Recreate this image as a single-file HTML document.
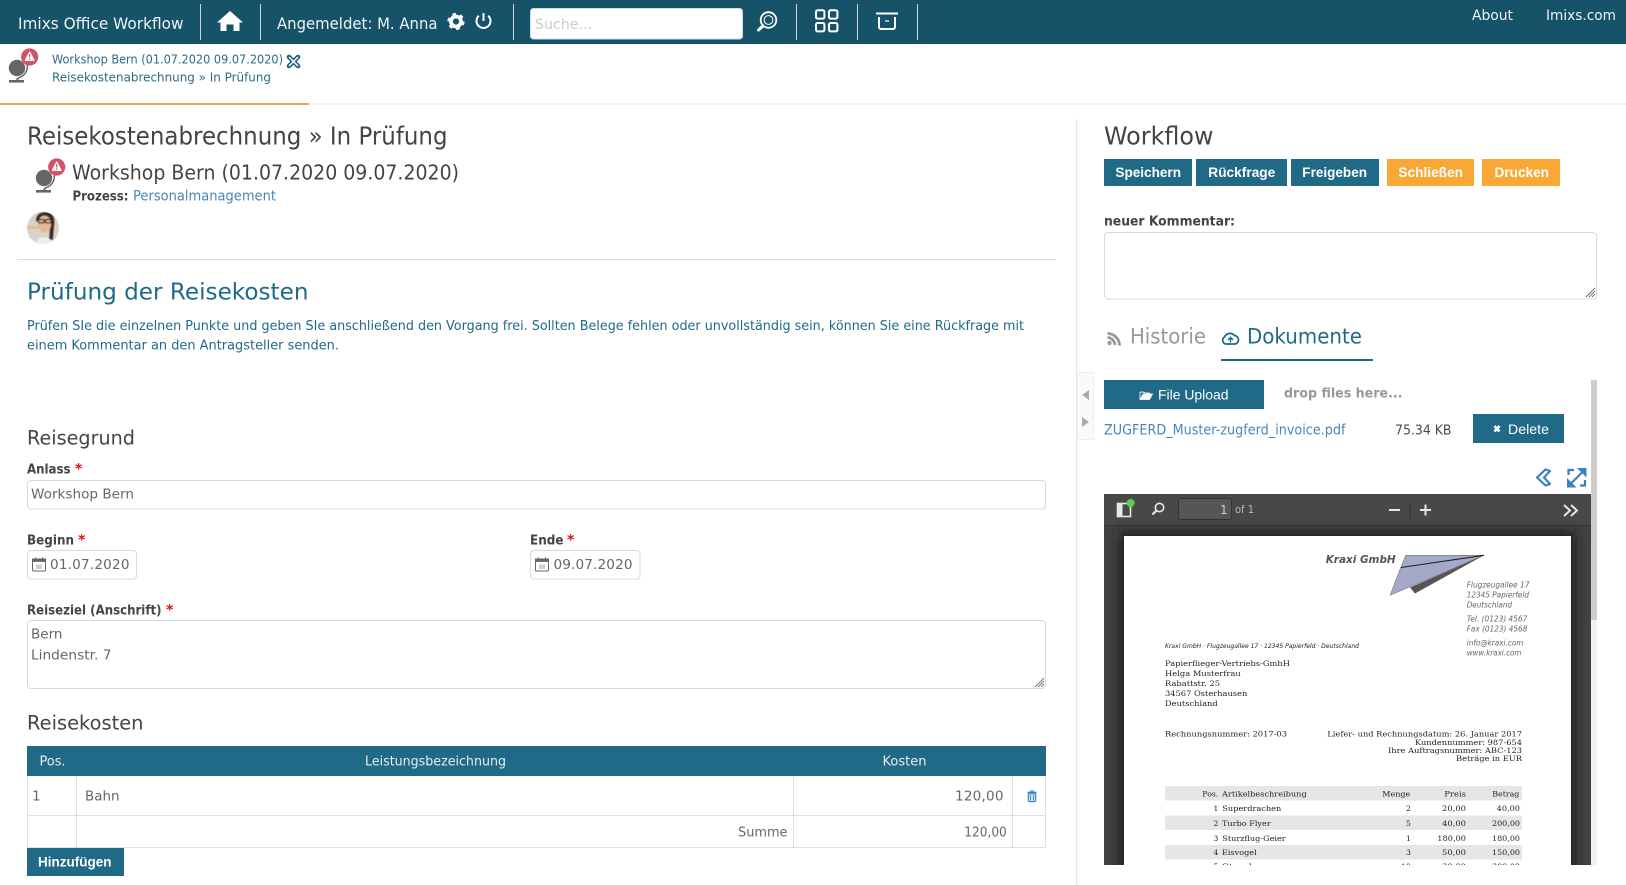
<!DOCTYPE html>
<html lang="de">
<head>
<meta charset="utf-8">
<title>Imixs Office Workflow</title>
<style>
html,body{margin:0;padding:0;background:#fff;width:1626px;height:885px;overflow:hidden}
svg{display:block;position:absolute;left:0;top:0}
text{font-family:"DejaVu Sans","Liberation Sans",sans-serif;fill:#444;white-space:pre}
.b{font-weight:700}
.lib{font-family:"Liberation Sans",Arial,sans-serif}
.ser{font-family:"DejaVu Serif","Liberation Serif",serif;fill:#222;font-size:7.6px}
.it{font-style:italic;fill:#666;font-size:8px}
.nav{fill:#eef3f5}
.blue{fill:#1f6a88}
.link{fill:#4a86b5}
.lab{font-weight:700;fill:#444;font-size:13.2px}
.star{font-weight:700;fill:#e01010;font-size:14px}
.val{fill:#666;font-size:13.6px}
.btn{font-family:"Liberation Sans",Arial,sans-serif;font-weight:700;fill:#fff;font-size:13.6px}
.th{fill:#e6eef2;font-size:13.4px}
</style>
</head>
<body>
<svg width="1626" height="885" viewBox="0 0 1626 885" xmlns="http://www.w3.org/2000/svg">
<defs>
<clipPath id="pdfclip"><rect x="1104" y="494" width="487" height="371"/></clipPath>
<filter id="sh" x="-10%" y="-10%" width="120%" height="120%"><feGaussianBlur stdDeviation="6"/></filter>
<filter id="soft"><feGaussianBlur stdDeviation=".6"/></filter>
<g id="globe">
<circle cx="17" cy="68" r="8.2" fill="#666"/>
<path d="M26 60.5C29.5 68 26 76 18 78" fill="none" stroke="#666" stroke-width="1.5"/>
<path d="M17.5 78V81" stroke="#666" stroke-width="2"/>
<path d="M9 81.3H24" stroke="#666" stroke-width="2.6"/>
<circle cx="29.7" cy="57" r="8.6" fill="#cf5468"/>
<path d="M29.7 52L34 60.3H25.4Z" fill="#fff" stroke="#fff" stroke-width="1.2" stroke-linejoin="round"/>
<path d="M29.7 54V57.4M29.7 58.4V59.6" stroke="#cf5468" stroke-width="1.3"/>
</g>
</defs>

<!-- navbar -->
<rect x="0" y="0" width="1626" height="44" fill="#165368"/>
<g stroke="#c9d6dc" stroke-width="1">
<path d="M200.5 4V40M260.5 4V40M513.5 4V40M796.5 4V40M857.5 4V40M917.5 4V40"/>
</g>
<text class="nav" x="18" y="29" font-size="16" textLength="165.5" lengthAdjust="spacingAndGlyphs">Imixs Office Workflow</text>
<path d="M230 11L243 22.5H239.5V31H233.5V24.5H226.5V31H220.5V22.5H217Z" fill="#fff"/>
<text class="nav" x="277" y="29" font-size="16" textLength="160.5" lengthAdjust="spacingAndGlyphs">Angemeldet: M. Anna</text>
<circle cx="456" cy="21.5" r="5" fill="none" stroke="#fff" stroke-width="3.8"/>
<circle cx="456" cy="21.5" r="7.4" fill="none" stroke="#fff" stroke-width="2.4" stroke-dasharray="3.6 4.15"/>
<path d="M478.8 15.8A7 7 0 1 0 488.2 15.8" fill="none" stroke="#fff" stroke-width="2"/>
<path d="M483.5 13V21" stroke="#fff" stroke-width="2"/>
<rect x="530.5" y="8.5" width="212" height="30.5" rx="3" fill="#fff" stroke="#cfdde3"/>
<text x="535" y="29" font-size="14.5" style="fill:#ccc" textLength="57" lengthAdjust="spacingAndGlyphs">Suche...</text>
<circle cx="768.5" cy="20" r="7.8" fill="none" stroke="#fff" stroke-width="1.8"/>
<circle cx="768.5" cy="20" r="4.4" fill="none" stroke="#fff" stroke-width="1"/>
<path d="M763 26L758.5 30" stroke="#fff" stroke-width="3" stroke-linecap="round"/>
<g fill="none" stroke="#fff" stroke-width="2">
<rect x="816" y="10.2" width="8.4" height="8.4" rx="1.6"/>
<rect x="829" y="10.2" width="8.4" height="8.4" rx="1.6"/>
<rect x="816" y="23" width="8.4" height="8.4" rx="1.6"/>
<rect x="829" y="23" width="8.4" height="8.4" rx="1.6"/>
<path d="M876 13.5H898"/>
<path d="M879 17V27a2 2 0 0 0 2 2H893a2 2 0 0 0 2-2V17"/>
</g>
<path d="M885 21H889" stroke="#fff" stroke-width="1.2"/>
<text class="nav" x="1472" y="20" font-size="14" textLength="41" lengthAdjust="spacingAndGlyphs">About</text>
<text class="nav" x="1546" y="20" font-size="14" textLength="70" lengthAdjust="spacingAndGlyphs">Imixs.com</text>

<!-- sub bar -->
<rect x="0" y="103" width="1626" height="2" fill="#f2f2f2"/>
<rect x="0" y="103" width="309" height="2" fill="#e3a954"/>
<use href="#globe"/>
<text x="52" y="63.5" font-size="12.6" style="fill:#2f6a8a" textLength="231" lengthAdjust="spacingAndGlyphs">Workshop Bern (01.07.2020 09.07.2020)</text>
<path d="M289 57L298 66M298 57L289 66" stroke="#1f6080" stroke-width="4.6" stroke-linecap="round"/>
<path d="M289 57L298 66M298 57L289 66" stroke="#fff" stroke-width="1.5"/>
<text x="52" y="81.5" font-size="12.6" style="fill:#2f6a8a" textLength="219" lengthAdjust="spacingAndGlyphs">Reisekostenabrechnung » In Prüfung</text>

<!-- left head -->
<text x="27" y="144.5" font-size="25" style="fill:#444" textLength="420.5" lengthAdjust="spacingAndGlyphs">Reisekostenabrechnung » In Prüfung</text>
<use href="#globe" x="27" y="110"/>
<text x="72" y="179.5" font-size="20.5" style="fill:#444" textLength="387" lengthAdjust="spacingAndGlyphs">Workshop Bern (01.07.2020 09.07.2020)</text>
<text class="b" x="72.5" y="200.5" font-size="13.2" textLength="56" lengthAdjust="spacingAndGlyphs">Prozess:</text>
<text class="link" x="133" y="200.5" font-size="13.8" textLength="143" lengthAdjust="spacingAndGlyphs">Personalmanagement</text>
<!-- avatar -->
<clipPath id="av"><ellipse cx="43" cy="228" rx="16" ry="16.3"/></clipPath>
<g clip-path="url(#av)">
<g filter="url(#soft)">
<rect x="26" y="211" width="34" height="34" fill="#d8d4cc"/>
<rect x="26" y="226" width="14" height="3" fill="#e2bd8a"/>
<path d="M36 222C35 214 41 212 46 212C53 212 56 218 54 228L53 240L49 240L50 222L44 217Z" fill="#3b2c26"/>
<ellipse cx="44.5" cy="224" rx="6.6" ry="8.4" fill="#e3b89a"/>
<path d="M36 244C37 235 50 235 54 244V248H36Z" fill="#f3ece6"/>
<path d="M29 236L35 246H27Z" fill="#7d8475"/>
<path d="M38 218C42 214 49 214 52 219L50 216L44 215Z" fill="#3b2c26"/>
<g fill="none" stroke="#222" stroke-width="1.2"><rect x="38.5" y="219.5" width="5.6" height="3.4" rx="1"/><rect x="45.5" y="219.5" width="5.6" height="3.4" rx="1"/></g>
</g>
</g>
<rect x="17" y="259" width="1039" height="1" fill="#dcdcdc"/>

<text class="blue" x="27" y="299.5" font-size="23.5" textLength="281.5" lengthAdjust="spacingAndGlyphs">Prüfung der Reisekosten</text>
<text class="blue" x="27" y="330" font-size="13.7" textLength="997" lengthAdjust="spacingAndGlyphs">Prüfen SIe die einzelnen Punkte und geben SIe anschließend den Vorgang frei. Sollten Belege fehlen oder unvollständig sein, können Sie eine Rückfrage mit</text>
<text class="blue" x="27" y="349.5" font-size="13.7" textLength="312" lengthAdjust="spacingAndGlyphs">einem Kommentar an den Antragsteller senden.</text>

<!-- Reisegrund -->
<text x="27" y="444.5" font-size="19.5" style="fill:#444" textLength="108" lengthAdjust="spacingAndGlyphs">Reisegrund</text>
<text class="lab" x="27" y="473.5" textLength="43.5" lengthAdjust="spacingAndGlyphs">Anlass</text>
<text class="star" x="75" y="473.5">*</text>
<rect x="27.5" y="480.5" width="1018" height="28.5" rx="3.5" fill="#fff" stroke="#d9d9d9"/>
<text class="val" x="31" y="498.5" textLength="103" lengthAdjust="spacingAndGlyphs">Workshop Bern</text>

<text class="lab" x="27" y="544.5" textLength="47" lengthAdjust="spacingAndGlyphs">Beginn</text>
<text class="star" x="78" y="544.5">*</text>
<rect x="27.5" y="550.5" width="109" height="28.5" rx="3.5" fill="#fff" stroke="#d9d9d9"/>
<g id="cal" fill="none" stroke="#666" stroke-width="1">
<rect x="32.5" y="560" width="13" height="11" rx="1"/>
<rect x="32.5" y="559" width="13" height="2.4" fill="#666"/>
<path d="M35.5 557.5V560M42.5 557.5V560"/>
<path d="M37 564.5V569M39 564.5V569M41 564.5V569" stroke-width=".8" stroke="#888"/>
</g>
<text class="val" x="50" y="569" textLength="79.5" lengthAdjust="spacing">01.07.2020</text>

<text class="lab" x="530" y="544.5" textLength="33.5" lengthAdjust="spacingAndGlyphs">Ende</text>
<text class="star" x="567" y="544.5">*</text>
<rect x="530.5" y="550.5" width="109.5" height="28.5" rx="3.5" fill="#fff" stroke="#d9d9d9"/>
<use href="#cal" x="503"/>
<text class="val" x="553.5" y="569" textLength="79" lengthAdjust="spacing">09.07.2020</text>

<text class="lab" x="27" y="614.5" textLength="134.5" lengthAdjust="spacingAndGlyphs">Reiseziel (Anschrift)</text>
<text class="star" x="166" y="614.5">*</text>
<rect x="27.5" y="620.5" width="1018" height="68" rx="3.5" fill="#fff" stroke="#d9d9d9"/>
<text class="val" x="31" y="638.5" textLength="31.5" lengthAdjust="spacingAndGlyphs">Bern</text>
<text class="val" x="31" y="659.5" textLength="80.5" lengthAdjust="spacingAndGlyphs">Lindenstr. 7</text>
<path d="M1035 687L1044 678M1038 687L1044 681M1041 687L1044 684" stroke="#777" stroke-width="1"/>

<!-- Reisekosten -->
<text x="27" y="729.5" font-size="19.5" style="fill:#444" textLength="116.5" lengthAdjust="spacingAndGlyphs">Reisekosten</text>
<rect x="27" y="746" width="1019" height="30" fill="#206a88"/>
<text class="th" x="39.5" y="765.5" textLength="26" lengthAdjust="spacingAndGlyphs">Pos.</text>
<text class="th" x="365" y="765.5" textLength="141" lengthAdjust="spacingAndGlyphs">Leistungsbezeichnung</text>
<text class="th" x="882.5" y="765.5" textLength="44" lengthAdjust="spacingAndGlyphs">Kosten</text>
<g fill="none" stroke="#dfdfdf" stroke-width="1">
<path d="M27.5 776V847.5H1045.5V776"/>
<path d="M27 815.5H1046"/>
<path d="M76.5 776V847.5M793.5 776V847.5M1012.5 776V847.5"/>
</g>
<text class="val" x="32" y="800.5" textLength="6">1</text>
<text class="val" x="85" y="800.5" textLength="34.5" lengthAdjust="spacingAndGlyphs">Bahn</text>
<text class="val" x="955" y="800.5" textLength="48.5" lengthAdjust="spacing">120,00</text>
<g fill="none" stroke="#3f88c5">
<path d="M1027.5 792.5H1036.5" stroke-width="1.6"/>
<path d="M1030 791H1034" stroke-width="1"/>
<rect x="1028.3" y="793.5" width="7.4" height="8" rx="1" stroke-width="1.2" fill="#cfe2f2"/>
<path d="M1030.5 795V800M1033.5 795V800" stroke-width=".9"/>
</g>
<text class="val" x="738" y="836.5" textLength="49.5" lengthAdjust="spacingAndGlyphs">Summe</text>
<text class="val" x="964.3" y="836.5" textLength="42.5" lengthAdjust="spacingAndGlyphs">120,00</text>
<rect x="27" y="848" width="97" height="28" fill="#206a88"/>
<text class="btn" x="38" y="866.5" textLength="73.5" lengthAdjust="spacingAndGlyphs">Hinzufügen</text>

<!-- right column -->
<rect x="1076" y="119" width="1" height="766" fill="#e6e6e6"/>
<text x="1104" y="144.5" font-size="25" style="fill:#444" textLength="109.5" lengthAdjust="spacingAndGlyphs">Workflow</text>
<g fill="#206a88">
<rect x="1104" y="159" width="88" height="27"/>
<rect x="1196" y="159" width="91" height="27"/>
<rect x="1291" y="159" width="88" height="27"/>
</g>
<g fill="#f9a836">
<rect x="1387" y="159" width="87" height="27"/>
<rect x="1482" y="159" width="78" height="27"/>
</g>
<text class="btn" x="1115.4" y="177" textLength="65.6" lengthAdjust="spacingAndGlyphs">Speichern</text>
<text class="btn" x="1208.3" y="177" textLength="67" lengthAdjust="spacingAndGlyphs">Rückfrage</text>
<text class="btn" x="1302.3" y="177" textLength="64.7" lengthAdjust="spacingAndGlyphs">Freigeben</text>
<text class="btn" x="1398.4" y="177" textLength="64.6" lengthAdjust="spacingAndGlyphs">Schließen</text>
<text class="btn" x="1494.5" y="177" textLength="54.5" lengthAdjust="spacingAndGlyphs">Drucken</text>
<text class="lab" x="1104" y="225.5" textLength="131" lengthAdjust="spacingAndGlyphs">neuer Kommentar:</text>
<rect x="1104.5" y="232.5" width="492" height="66.5" rx="3.5" fill="#fff" stroke="#d9d9d9"/>
<path d="M1586 297L1595 288M1589 297L1595 291M1592 297L1595 294" stroke="#777" stroke-width="1"/>

<!-- tabs -->
<circle cx="1109.5" cy="343" r="2.2" fill="#999"/>
<path d="M1107.5 337.5A8 8 0 0 1 1115 345M1107.5 333.5A12 12 0 0 1 1119.5 345.5" fill="none" stroke="#999" stroke-width="2.8"/>
<text x="1130" y="343.5" font-size="21.5" style="fill:#999" textLength="76" lengthAdjust="spacingAndGlyphs">Historie</text>
<path d="M1226 344A3.8 3.8 0 0 1 1224.5 337A6 6 0 0 1 1234.5 335.5A4.3 4.3 0 0 1 1235 344Z" fill="none" stroke="#1f6a88" stroke-width="1.8"/>
<path d="M1230.5 342.5V338M1228 340L1230.5 337.5L1233 340" fill="none" stroke="#1f6a88" stroke-width="1.4"/>
<text class="blue" x="1247" y="343.5" font-size="21.5" textLength="115" lengthAdjust="spacingAndGlyphs">Dokumente</text>
<rect x="1221" y="359" width="152" height="2" fill="#206a88"/>

<!-- splitter -->
<rect x="1077.5" y="372.5" width="16" height="67" fill="#fafafa" stroke="#e2e2e2" stroke-dasharray="1 1"/>
<path d="M1082 395L1089 390V400Z" fill="#aaa"/>
<path d="M1082 417V427L1089 422Z" fill="#aaa"/>

<!-- upload -->
<rect x="1104" y="380" width="160" height="29" fill="#206a88"/>
<path d="M1140 392V399.5H1149.5L1152.5 394H1143L1140.5 399M1140 392H1144L1145 393H1149.5V394" fill="#fff" stroke="#fff" stroke-width=".8"/>
<text class="lib" x="1158" y="399.5" font-size="14" style="fill:#fff" textLength="70.5" lengthAdjust="spacingAndGlyphs">File Upload</text>
<text x="1284" y="397.5" font-size="13.5" font-weight="700" style="fill:#999" textLength="118.5" lengthAdjust="spacingAndGlyphs">drop files here...</text>
<text class="link" x="1104" y="434.5" font-size="13.8" textLength="241.5" lengthAdjust="spacingAndGlyphs">ZUGFERD_Muster-zugferd_invoice.pdf</text>
<text x="1395" y="434.5" font-size="13.6" style="fill:#4a4a4a" textLength="56.5" lengthAdjust="spacingAndGlyphs">75.34 KB</text>
<rect x="1473" y="414" width="91" height="29" fill="#206a88"/>
<path d="M1494.5 426L1499.5 431.5M1499.5 426L1494.5 431.5" stroke="#fff" stroke-width="2.6"/>
<text class="lib" x="1508" y="434" font-size="14" style="fill:#fff" textLength="41" lengthAdjust="spacingAndGlyphs">Delete</text>

<!-- blue icons -->
<path d="M1545.5 469.5L1537 477.5L1545.5 485.5L1550 484L1544 477.5L1550 471Z" fill="none" stroke="#3a80c2" stroke-width="2.2" stroke-linejoin="round"/>
<g fill="none" stroke="#3a80c2" stroke-width="2.2">
<path d="M1568.5 475V470H1574M1585 480V485.5H1580"/>
<path d="M1582 472.5L1576.5 478M1571.5 483L1577 477.5"/>
</g>
<path d="M1577 468H1586.5V477.5ZM1576.5 487.5H1567V478Z" fill="#3a80c2"/>

<!-- scrollbar -->
<rect x="1591" y="380" width="6" height="485" fill="#f1f1f1"/>
<rect x="1591" y="380" width="6" height="240" fill="#cdcdcd"/>

<!-- pdf viewer -->
<g clip-path="url(#pdfclip)">
<rect x="1104" y="494" width="487" height="371" fill="#424242"/>
<rect x="1104" y="494" width="487" height="32" fill="#484848"/>
<rect x="1104" y="525" width="487" height="1" fill="#383838"/>
<rect x="1117.5" y="503.5" width="13" height="13" fill="none" stroke="#e8e8e8" stroke-width="1.6"/>
<rect x="1118" y="504" width="4.5" height="12" fill="#e8e8e8"/>
<circle cx="1130.6" cy="503" r="4" fill="#57d24a"/>
<circle cx="1159.5" cy="507.5" r="4.2" fill="none" stroke="#e8e8e8" stroke-width="1.6"/>
<path d="M1156.5 510.5L1152.5 514.5" stroke="#e8e8e8" stroke-width="2.2"/>
<rect x="1178.5" y="498.5" width="53" height="21" rx="2" fill="#565656" stroke="#333"/>
<text x="1220" y="514" font-size="12" style="fill:#ccc">1</text>
<text x="1235" y="513" font-size="11" style="fill:#bbb" textLength="19" lengthAdjust="spacingAndGlyphs">of 1</text>
<path d="M1389 510H1400" stroke="#e8e8e8" stroke-width="2"/>
<rect x="1409.5" y="502" width="1" height="17" fill="#333"/>
<path d="M1420 510H1431M1425.5 504.5V515.5" stroke="#e8e8e8" stroke-width="2"/>
<path d="M1564 505L1570 510.5L1564 516M1571 505L1577 510.5L1571 516" fill="none" stroke="#e8e8e8" stroke-width="2"/>
<rect x="1120" y="532" width="455" height="345" fill="#1e1e1e" filter="url(#sh)"/>
<rect x="1124" y="536" width="447" height="340" fill="#fff"/>

<text x="1325.7" y="563" font-size="10.6" font-weight="700" font-style="italic" style="fill:#555" textLength="70" lengthAdjust="spacingAndGlyphs">Kraxi GmbH</text>
<path d="M1405.7 555.3H1484L1390 595.3L1401 566.7Z" fill="#a4a9c8" stroke="#666" stroke-width=".5"/>
<path d="M1410 587.5L1415 593.5L1484 555.3Z" fill="#555"/>
<path d="M1401 567.5L1484 555.3" stroke="#222" stroke-width="1.1"/>

<text class="it" x="1466.7" y="587.3" textLength="62.7" lengthAdjust="spacingAndGlyphs">Flugzeugallee 17</text>
<text class="it" x="1466.7" y="597.5" textLength="62.3" lengthAdjust="spacingAndGlyphs">12345 Papierfeld</text>
<text class="it" x="1466.7" y="607.5" textLength="45.3" lengthAdjust="spacingAndGlyphs">Deutschland</text>
<text class="it" x="1466.7" y="621.5" textLength="60.7" lengthAdjust="spacingAndGlyphs">Tel. (0123) 4567</text>
<text class="it" x="1466.7" y="631.5" textLength="60.7" lengthAdjust="spacingAndGlyphs">Fax (0123) 4568</text>
<text class="it" x="1466.7" y="645.5" textLength="56.7" lengthAdjust="spacingAndGlyphs">info@kraxi.com</text>
<text class="it" x="1466.7" y="655.5" textLength="54.7" lengthAdjust="spacingAndGlyphs">www.kraxi.com</text>
<text x="1165" y="648" font-size="6.2" font-style="italic" style="fill:#222" textLength="194" lengthAdjust="spacingAndGlyphs">Kraxi GmbH · Flugzeugallee 17 · 12345 Papierfeld · Deutschland</text>

<text class="ser" x="1165" y="665.8" textLength="125" lengthAdjust="spacingAndGlyphs">Papierflieger-Vertriebs-GmbH</text>
<text class="ser" x="1165" y="675.8" textLength="75.7" lengthAdjust="spacingAndGlyphs">Helga Musterfrau</text>
<text class="ser" x="1165" y="685.8" textLength="55" lengthAdjust="spacingAndGlyphs">Rabattstr. 25</text>
<text class="ser" x="1165" y="695.8" textLength="82.3" lengthAdjust="spacingAndGlyphs">34567 Osterhausen</text>
<text class="ser" x="1165" y="705.8" textLength="52.7" lengthAdjust="spacingAndGlyphs">Deutschland</text>

<text class="ser" x="1165" y="736.7" textLength="122" lengthAdjust="spacingAndGlyphs">Rechnungsnummer: 2017-03</text>
<text class="ser" x="1327.3" y="736.7" textLength="194.7" lengthAdjust="spacingAndGlyphs">Liefer- und Rechnungsdatum: 26. Januar 2017</text>
<text class="ser" x="1415" y="745" textLength="107" lengthAdjust="spacingAndGlyphs">Kundennummer: 987-654</text>
<text class="ser" x="1388" y="753" textLength="134" lengthAdjust="spacingAndGlyphs">Ihre Auftragsnummer: ABC-123</text>
<text class="ser" x="1456" y="761" textLength="66" lengthAdjust="spacingAndGlyphs">Beträge in EUR</text>

<g fill="#e6e6e6">
<rect x="1165" y="786" width="357" height="14.5"/>
<rect x="1165" y="815.5" width="357" height="14.5"/>
<rect x="1165" y="845" width="357" height="14.5"/>
</g>
<text class="ser" x="1202.3" y="796.5" textLength="16" lengthAdjust="spacingAndGlyphs">Pos.</text>
<text class="ser" x="1222" y="796.5" textLength="84.7" lengthAdjust="spacingAndGlyphs">Artikelbeschreibung</text>
<text class="ser" x="1382.3" y="796.5" textLength="28" lengthAdjust="spacingAndGlyphs">Menge</text>
<text class="ser" x="1444.3" y="796.5" textLength="21.7" lengthAdjust="spacingAndGlyphs">Preis</text>
<text class="ser" x="1492.3" y="796.5" textLength="27" lengthAdjust="spacingAndGlyphs">Betrag</text>

<g>
<text class="ser" x="1213.5" y="810.8">1</text><text class="ser" x="1222.3" y="810.8" textLength="59" lengthAdjust="spacingAndGlyphs">Superdrachen</text><text class="ser" x="1406" y="810.8">2</text><text class="ser" x="1442" y="810.8" textLength="24" lengthAdjust="spacingAndGlyphs">20,00</text><text class="ser" x="1496.7" y="810.8" textLength="23.3" lengthAdjust="spacingAndGlyphs">40,00</text>
<text class="ser" x="1213.5" y="825.8">2</text><text class="ser" x="1222" y="825.8" textLength="48.7" lengthAdjust="spacingAndGlyphs">Turbo Flyer</text><text class="ser" x="1406" y="825.8">5</text><text class="ser" x="1442" y="825.8" textLength="24" lengthAdjust="spacingAndGlyphs">40,00</text><text class="ser" x="1492" y="825.8" textLength="28" lengthAdjust="spacingAndGlyphs">200,00</text>
<text class="ser" x="1213.5" y="840.8">3</text><text class="ser" x="1222.3" y="840.8" textLength="63.4" lengthAdjust="spacingAndGlyphs">Sturzflug-Geier</text><text class="ser" x="1406" y="840.8">1</text><text class="ser" x="1437.3" y="840.8" textLength="28.7" lengthAdjust="spacingAndGlyphs">180,00</text><text class="ser" x="1492" y="840.8" textLength="28" lengthAdjust="spacingAndGlyphs">180,00</text>
<text class="ser" x="1213.5" y="854.8">4</text><text class="ser" x="1222" y="854.8" textLength="34.7" lengthAdjust="spacingAndGlyphs">Eisvogel</text><text class="ser" x="1406" y="854.8">3</text><text class="ser" x="1442" y="854.8" textLength="24" lengthAdjust="spacingAndGlyphs">50,00</text><text class="ser" x="1492" y="854.8" textLength="28" lengthAdjust="spacingAndGlyphs">150,00</text>
<text class="ser" x="1213.5" y="869">5</text><text class="ser" x="1222" y="869" textLength="30" lengthAdjust="spacingAndGlyphs">Stand</text><text class="ser" x="1401" y="869">10</text><text class="ser" x="1442" y="869" textLength="24" lengthAdjust="spacingAndGlyphs">30,00</text><text class="ser" x="1492" y="869" textLength="28" lengthAdjust="spacingAndGlyphs">300,00</text>
</g>
</g>
</svg>
</body>
</html>
